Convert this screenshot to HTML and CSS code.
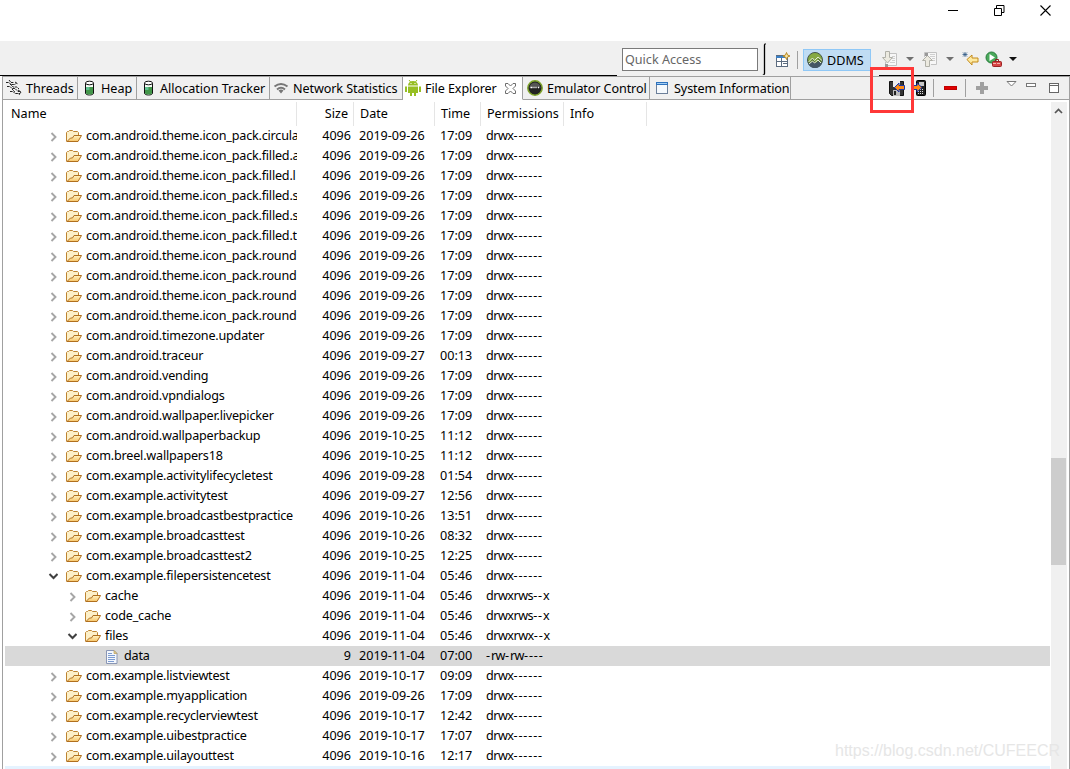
FILE: index.html
```
<!DOCTYPE html>
<html lang="en">
<head>
    <meta charset="UTF-8">
    <title>DDMS - File Explorer</title>
    <link rel="stylesheet" href="styles.css">
</head>
<body>
    <svg class="defs" width="0" height="0">
        <defs>
            <linearGradient id="gold" x1="0" y1="0" x2="0" y2="1">
                <stop offset="0" stop-color="#fff3c4"/>
                <stop offset="1" stop-color="#f7c567"/>
            </linearGradient>
            <symbol id="folder" viewBox="0 0 16 13">
                <path d="M.5 11.500v-9l1-1h1l1-1h3l1 1h4l1 1v3" fill="#fdf0c8" stroke="#bd8433"/>
                <path d="M1 11.500L4.500 8h2l1.500-2.500h7.500l-3.500 6z" fill="url(#gold)" stroke="#b06f1e"/>
            </symbol>
            <symbol id="closed" viewBox="0 0 8 10">
                <path d="M1.500 1l4 4-4 4" fill="none" stroke="#a6a6a6" stroke-width="1.900"/>
            </symbol>
            <symbol id="open" viewBox="0 0 10 8">
                <path d="M1.500 2l4 4 4-4" fill="none" stroke="#404040" stroke-width="2"/>
            </symbol>
            <symbol id="file" viewBox="0 0 12 14">
                <path d="M.5.5h7.500l3 3v10H.5z" fill="#f3f7fd" stroke="#8a96b4"/>
                <path d="M8 .5v3h3z" fill="#e8cf8c" stroke="#b79d5d" stroke-width=".7"/>
                <path d="M2 3.500h4M2 5.500h7M2 7.500h7M2 9.500h7M2 11.500h6" stroke="#7c9bd0"/>
            </symbol>
            <symbol id="heap" viewBox="0 0 16 16">
                <path d="M4.500 3v10c0 1.500 2 2 4 2s4-.5 4-2V3" fill="#f5fbf5" stroke="#111"/>
                <path d="M5 7h7v6c0 1-1.500 1.500-3.500 1.500s-3.500-.5-3.500-1.500z" fill="#43964a"/>
                <path d="M5 7h3.500v3H5z" fill="#62c091"/>
                <ellipse cx="8.500" cy="3" rx="4" ry="1.800" fill="#fff" stroke="#111"/>
            </symbol>
        </defs>
    </svg>

    <header class="titlebar">
        <svg width="11" height="11"><path d="M0 5.500h10" stroke="#000"/></svg>
        <svg width="11" height="11"><path d="M.5 3.500h7v7h-7zM2.500 3V.5h7.500v7H8" fill="none" stroke="#000"/></svg>
        <svg width="11" height="11"><path d="M.5.5l10 10M10.500.5l-10 10" stroke="#000" stroke-width="1.100"/></svg>
    </header>

    <div class="toolbar">
        <div class="quick"><span>Quick Access</span></div>
        <svg class="curve" width="7" height="33"><path d="M.5 32.500h1l1-2V2l1-1.500" fill="none" stroke="#000" stroke-width="1.300"/></svg>
        <svg class="perspective" width="16" height="16">
            <rect x="1.500" y="3.500" width="11" height="11" fill="#fff" stroke="#5c6c80"/>
            <path d="M1 5h9" stroke="#3b7fc4" stroke-width="2"/>
            <path d="M2 9.500h10M6.500 6v8M8 11.500h4" stroke="#5c6c80"/>
            <path d="M11.500.5l1 2.500 2.500 1-2.500 1-1 2.500-1-2.500-2.500-1 2.500-1z" fill="#f8e6a6" stroke="#b98a23"/>
        </svg>
        <i class="divider"></i>
        <div class="ddms">
            <svg width="16" height="16">
                <circle cx="8" cy="8" r="7.500" fill="#5d7c36" stroke="#45554e"/>
                <path d="M1 8a7 7 0 0 1 14 0l-3-2-3 4-3-4-3 4z" fill="#86a943"/>
                <path d="M1 11.500A7.500 7.500 0 0 0 15 11l-3-2-3 2-3-1z" fill="#445664"/>
                <path d="M1.500 10l4-4 2 2.500 3.500-3.500 4 3.500M2 12l3.500-3 2 2 3.500-3 3 3" fill="none" stroke="#e4ecd8"/>
            </svg>
            <span>DDMS</span>
        </div>
        <svg class="tool next" width="16" height="17">
            <path d="M5.500 2.500h9v12h-11V11" fill="#f7f7f7" stroke="#c2c2c2"/>
            <path d="M10 5.500h3M10 7.500h3M10 9.500h3M8 11.500h5" stroke="#cfcfcf"/>
            <path d="M3.500.5h4v6h3L5.500 12l-5-5.500h3z" fill="#eceae0" stroke="#b0b0a8"/>
            <rect x="3" y="13" width="3" height="3" fill="#999"/>
        </svg>
        <svg class="arrow" width="8" height="4"><path d="M0 0h8L4 4z" fill="#707070"/></svg>
        <svg class="tool prev" width="16" height="17">
            <path d="M2.500 6V1.500h12v12H9" fill="#f7f7f7" stroke="#c2c2c2"/>
            <path d="M8 3.500h5M8 5.500h5M10 7.500h3M10 9.500h3" stroke="#cfcfcf"/>
            <path d="M3.500 15.500v-6h-3l5-5 5 5h-3v6z" fill="#eceae0" stroke="#b0b0a8"/>
            <rect x="3" y="2" width="3" height="3" fill="#999"/>
        </svg>
        <svg class="arrow" width="8" height="4"><path d="M0 0h8L4 4z" fill="#707070"/></svg>
        <svg class="tool back" width="17" height="16">
            <path d="M5 8.500L10 4v3h6v4h-6v3z" fill="#fde9a0" stroke="#c48a18"/>
            <path d="M3 1v5M.5 3.500h5M1 1.500l4 4M5 1.500l-4 4" stroke="#315b86" stroke-width=".8"/>
        </svg>
        <svg class="tool run" width="17" height="16">
            <circle cx="6.500" cy="6.500" r="5.500" fill="#4aa95b" stroke="#277a3a"/>
            <path d="M4.500 3v7L10 6.500z" fill="#fff"/>
            <path d="M10.500 10V8.500h3V10" fill="none" stroke="#8c1f1f"/>
            <rect x="7.500" y="10.500" width="9" height="5" rx="1" fill="#d64545" stroke="#9c2323"/>
            <path d="M8 12.500h8" stroke="#f3b0a8" stroke-dasharray="3 1"/>
        </svg>
        <svg class="arrow" width="8" height="4"><path d="M0 0h8L4 4z" fill="#111"/></svg>
    </div>
    <div class="edge"><i></i><i></i></div>

    <main class="pane">
        <nav class="tabs">
            <div class="tab threads">
                <svg width="16" height="16"><path d="M0 2.500h3l2 2h4l2-2M3 0l2 2.500h3M1 6.500h3l2 2h3l3 3h3M4 4l3 3h4l2 2M4 11.500h3l2 2h5M12 10l3 2-2 3M6 9l3 3M9 2l3 2" fill="none" stroke="#222" stroke-dasharray="2.500 .6"/></svg>
                <span>Threads</span>
            </div>
            <div class="tab heap">
                <svg width="16" height="16"><use href="#heap"/></svg>
                <span>Heap</span>
            </div>
            <div class="tab allocation">
                <svg width="16" height="16"><use href="#heap"/></svg>
                <span>Allocation Tracker</span>
            </div>
            <div class="tab network">
                <svg width="16" height="16"><path d="M1.500 6.500q6.500-5 13 0M4 9.500q4-3.500 8 0" fill="none" stroke="#777" stroke-width="2"/><path d="M5.500 10.500Q8 8.500 10.500 10.500L8 13.500z" fill="#777"/></svg>
                <span>Network Statistics</span>
            </div>
            <div class="tab explorer active">
                <svg width="16" height="16">
                    <path d="M3 5.500a5 4.500 0 0 1 10 0zM3 6.500h10V13H3zM0 6.500h2V12H0zM14 6.500h2V12h-2zM5 13h2v3H5zM9 13h2v3H9z" fill="#97bf23"/>
                    <path d="M4 0l2 2.500M12 0l-2 2.500" stroke="#97bf23"/>
                    <path d="M5.500 3.500h1M9.500 3.500h1" stroke="#fff"/>
                </svg>
                <span>File Explorer</span>
                <svg class="close" width="11" height="11"><path d="M.5.500h2.500l2.500 2.500L8 .5h2.500V3L8 5.500 10.500 8v2.500H8L5.500 8 3 10.500H.5V8L3 5.500.5 3z" fill="#fff" stroke="#6d6d6d"/></svg>
            </div>
            <div class="tab emulator">
                <svg width="16" height="16">
                    <circle cx="8" cy="8" r="7.200" fill="#222" stroke="#7ea32b" stroke-width="1.500"/>
                    <path d="M2.500 8a5.500 5.500 0 0 1 11 0z" fill="#555"/>
                    <path d="M3.500 7.500h2M6.500 7.500h1M8.500 7.500h1M11 7.500h1" stroke="#fff" stroke-width="1.500"/>
                </svg>
                <span>Emulator Control</span>
            </div>
            <div class="tab system">
                <svg width="14" height="14"><rect x="1.500" y="1.500" width="11" height="11" fill="#f5f9fd" stroke="#6c7f99"/><path d="M1 2.500h12" stroke="#2d72bd" stroke-width="3"/><path d="M2 2.500h10" stroke="#a4cdf2"/></svg>
                <span>System Information</span>
            </div>

            <div class="actions">
                <svg width="16" height="16">
                    <path d="M.5 1.500h14v14H2.500l-2-2z" fill="#333" stroke="#111"/>
                    <path d="M4 1h7v6H4z" fill="#eee"/>
                    <path d="M4 10h7v6H4z" fill="#bbb"/>
                    <path d="M5 11h2v4H5z" fill="#222"/>
                    <path d="M5.500 7.500L10 3v2.500h5.500v4H10V12z" fill="#ff8b13" stroke="#1837a8"/>
                </svg>
                <svg class="push" width="14" height="16">
                    <rect x="3.500" y=".5" width="9" height="15" rx="1" fill="#222" stroke="#000"/>
                    <path d="M6 2h5v4H6z" fill="#c8c8c8"/>
                    <path d="M5 9.500h6M5 11.500h6M5 13.500h6" stroke="#ddd" stroke-dasharray="1 1"/>
                    <path d="M0 5.500h4V3l5 4.500L4 12V9.500H0z" fill="#ff8b13" stroke="#1837a8"/>
                </svg>
                <i class="divider"></i>
                <svg class="minus" width="13" height="4"><rect x=".5" y=".5" width="12" height="3" fill="#e00000" stroke="#c00000"/></svg>
                <i class="divider"></i>
                <svg class="plus" width="12" height="12"><path d="M4 0h4v4h4v4H8v4H4V8H0V4h4z" fill="#a0a0a0"/></svg>
                <svg class="menu" width="11" height="6"><path d="M1 .5h9L5.500 5z" fill="#fff" stroke="#777"/></svg>
                <svg class="min" width="10" height="4"><rect x=".5" y=".5" width="9" height="3" fill="#fff" stroke="#777"/></svg>
                <svg class="max" width="10" height="10"><rect x=".5" y=".5" width="9" height="9" fill="#fff" stroke="#666"/><path d="M0 2.500h10" stroke="#666"/></svg>
            </div>
        </nav>

        <div class="content">
            <div class="tree">
                <div class="row head">
                    <div>Name</div><div>Size</div><div>Date</div><div>Time</div><div>Permissions</div><div>Info</div>
                </div>
                <div id="rows"></div>
                <div class="hovered"></div>
            </div>
            <div class="scrollbar">
                <svg width="9" height="6"><path d="M1 5l3.500-3.500L8 5" fill="none" stroke="#555" stroke-width="1.700"/></svg>
                <div class="thumb"></div>
            </div>
        </div>
    </main>

    <div class="highlight"></div>
    <div class="watermark">https://blog.csdn.net/CUFEECR</div>

    <script>
        // name, date, time, permissions, level, state
        const entries = [
            ["com.android.theme.icon_pack.circula", "2019-09-26", "17:09"],
            ["com.android.theme.icon_pack.filled.a", "2019-09-26", "17:09"],
            ["com.android.theme.icon_pack.filled.l", "2019-09-26", "17:09"],
            ["com.android.theme.icon_pack.filled.s", "2019-09-26", "17:09"],
            ["com.android.theme.icon_pack.filled.s", "2019-09-26", "17:09"],
            ["com.android.theme.icon_pack.filled.t", "2019-09-26", "17:09"],
            ["com.android.theme.icon_pack.round", "2019-09-26", "17:09"],
            ["com.android.theme.icon_pack.round", "2019-09-26", "17:09"],
            ["com.android.theme.icon_pack.round", "2019-09-26", "17:09"],
            ["com.android.theme.icon_pack.round", "2019-09-26", "17:09"],
            ["com.android.timezone.updater", "2019-09-26", "17:09"],
            ["com.android.traceur", "2019-09-27", "00:13"],
            ["com.android.vending", "2019-09-26", "17:09"],
            ["com.android.vpndialogs", "2019-09-26", "17:09"],
            ["com.android.wallpaper.livepicker", "2019-09-26", "17:09"],
            ["com.android.wallpaperbackup", "2019-10-25", "11:12"],
            ["com.breel.wallpapers18", "2019-10-25", "11:12"],
            ["com.example.activitylifecycletest", "2019-09-28", "01:54"],
            ["com.example.activitytest", "2019-09-27", "12:56"],
            ["com.example.broadcastbestpractice", "2019-10-26", "13:51"],
            ["com.example.broadcasttest", "2019-10-26", "08:32"],
            ["com.example.broadcasttest2", "2019-10-25", "12:25"],
            ["com.example.filepersistencetest", "2019-11-04", "05:46", "drwx------", 0, "open"],
            ["cache", "2019-11-04", "05:46", "drwxrws--x", 1],
            ["code_cache", "2019-11-04", "05:46", "drwxrws--x", 1],
            ["files", "2019-11-04", "05:46", "drwxrwx--x", 1, "open"],
            ["data", "2019-11-04", "07:00", "-rw-rw----", 2, "file"],
            ["com.example.listviewtest", "2019-10-17", "09:09"],
            ["com.example.myapplication", "2019-09-26", "17:09"],
            ["com.example.recyclerviewtest", "2019-10-17", "12:42"],
            ["com.example.uibestpractice", "2019-10-17", "17:07"],
            ["com.example.uilayouttest", "2019-10-16", "12:17"]
        ];

        document.getElementById("rows").innerHTML = entries.map(([name, date, time, perm = "drwx------", level = 0, state = "closed"]) => {
            const isFile = state === "file";
            const twisty = isFile ? "" : `<svg class="${state}"><use href="#${state}"/></svg>`;
            const icon = isFile ? "file" : "folder";
            const perms = perm.replace(/-+/g, "<span>$&</span>");
            return `<div class="row ${isFile ? "selected" : ""}">
                <div class="name level${level}"><span class="twisty">${twisty}</span><svg class="${icon}"><use href="#${icon}"/></svg><span class="label">${name}</span></div>
                <div class="size">${isFile ? 9 : 4096}</div><div class="date">${date}</div><div class="time">${time}</div><div class="perm">${perms}</div>
            </div>`;
        }).join("");
    </script>
</body>
</html>
```
FILE: styles.css
```
* {
    box-sizing: border-box;
}

body {
    margin: 0;
    width: 1070px;
    height: 769px;
    overflow: hidden;
    position: relative;
    display: flex;
    flex-direction: column;
    background-color: #fff;
    color: #000;
    font-family: "Noto Sans", "Open Sans", sans-serif;
    font-size: 12.6px;
    white-space: nowrap;
}

svg {
    display: block;
    flex: none;
}

.defs {
    position: absolute;
}

.titlebar {
    height: 41px;
    padding: 5px 19px 0 0;
    display: flex;
    justify-content: flex-end;
    gap: 35px;
}

.toolbar {
    height: 34px;
    padding-left: 622px;
    display: flex;
    align-items: center;
    background-color: #f0f0f0;
}

.quick {
    width: 136px;
    height: 23px;
    margin-top: 3px;
    padding-left: 2px;
    border: 1px solid #7a7a7a;
    background-color: #fff;
    color: #666;
    line-height: 21px;
}

.curve {
    margin: 2px 0 0 4px;
}

.perspective {
    margin: 3px 6px 0 6px;
}

.divider {
    width: 1px;
    height: 18px;
    background-color: #a0a0a0;
}

.toolbar .divider {
    margin: 4px 5px 0 0;
}

.ddms {
    width: 68px;
    height: 22px;
    margin: 4px 11px 0 0;
    padding-left: 3px;
    display: flex;
    align-items: center;
    gap: 4px;
    border: 1px solid #90c8f6;
    background-color: #c0dcf3;
}

.tool {
    margin-top: 2px;
}

.arrow {
    margin: 2px 8px 0 8px;
}

.back {
    margin-right: 6px;
}

.run {
    margin-right: -1px;
}

.edge {
    height: 1px;
    display: flex;
    justify-content: space-between;
    background-color: #f0f0f0;
}

.edge i {
    width: 617px;
    background-color: #000;
}

.edge i:last-child {
    width: 191px;
}

.pane {
    flex: 1;
    margin-left: 2px;
    border: 1px solid #a0a0a0;
    border-bottom: none;
    display: flex;
    flex-direction: column;
}

.tabs {
    height: 23px;
    display: flex;
    background-color: #f0f0f0;
}

.tab {
    display: flex;
    align-items: center;
    gap: 4px;
    padding-left: 3px;
    border-right: 1px solid #a0a0a0;
    border-bottom: 1px solid #a0a0a0;
}

.threads {
    width: 75px;
}

.heap {
    width: 59px;
}

.allocation,
.network {
    width: 133px;
}

.network,
.explorer,
.emulator,
.system {
    letter-spacing: -0.1px;
}

.explorer {
    width: 120px;
    padding-left: 2px;
}

.emulator {
    width: 127px;
    padding-left: 4px;
}

.system {
    width: 141px;
    gap: 5px;
    padding-left: 5px;
}

.active {
    background-color: #fff;
    border-bottom-color: #fff;
}

.close {
    margin-left: 4px;
}

.actions {
    flex: 1;
    display: flex;
    align-items: center;
    padding-left: 98px;
    border-bottom: 1px solid #a0a0a0;
}

.push {
    margin: 0 6px 0 8px;
}

.minus {
    margin: 0 8px 0 10px;
}

.plus {
    margin: 0 18px 0 10px;
}

.menu {
    margin: 0 9px 8px 0;
}

.min {
    margin: 0 13px 6px 0;
}

.content {
    flex: 1;
    display: flex;
    justify-content: space-between;
    padding: 2px 2px 0 2px;
}

.tree {
    width: 1045px;
}

.row {
    height: 20px;
    display: grid;
    grid-template-columns: 292px 57px 81px 46px 83px 83px;
    line-height: 19px;
}

.row > div {
    overflow: hidden;
}

.head {
    height: 24px;
    line-height: 23px;
}

.head > div {
    padding-left: 6px;
    border-right: 1px solid #e5e5e5;
}

.head > div:nth-child(2) {
    padding-right: 5px;
    text-align: right;
}

.selected {
    background-color: #d9d9d9;
}

.name {
    display: flex;
    align-items: flex-start;
}

.name .folder,
.name .file {
    margin: 4px 4px 0 0;
}

.label {
    letter-spacing: -0.2px;
}

.level0 {
    padding-left: 43px;
}

.level1 {
    padding-left: 62px;
}

.level2 {
    padding-left: 83px;
}

.twisty {
    width: 18px;
    flex: none;
}

.closed {
    width: 8px;
    height: 10px;
    margin: 6px 0 0 2px;
}

.open {
    width: 10px;
    height: 8px;
    margin-top: 6px;
}

.folder {
    width: 16px;
    height: 13px;
}

.file {
    width: 12px;
    height: 14px;
}

.name .file {
    margin-right: 6px;
}

.size {
    padding-right: 3px;
    text-align: right;
}

.date,
.time,
.perm {
    padding-left: 5px;
}

.perm {
    letter-spacing: -0.5px;
}

.perm span {
    letter-spacing: 0.85px;
}

.hovered {
    height: 3px;
    background-color: #e5f3ff;
}

.scrollbar {
    width: 16px;
    background-color: #f0f0f0;
}

.scrollbar svg {
    margin: 6px 0 0 3px;
}

.thumb {
    width: 15px;
    height: 107px;
    margin-top: 344px;
    background-color: #cdcdcd;
}

/* frame drawn over the pull button */
.highlight {
    position: absolute;
    left: 870px;
    top: 67px;
    width: 44px;
    height: 46px;
    border: 3px solid #ff3838;
}

.watermark {
    position: absolute;
    right: 10px;
    bottom: 9px;
    color: #e6e6e6;
    font-family: "Liberation Sans", Arial, sans-serif;
    font-size: 16px;
}
```
